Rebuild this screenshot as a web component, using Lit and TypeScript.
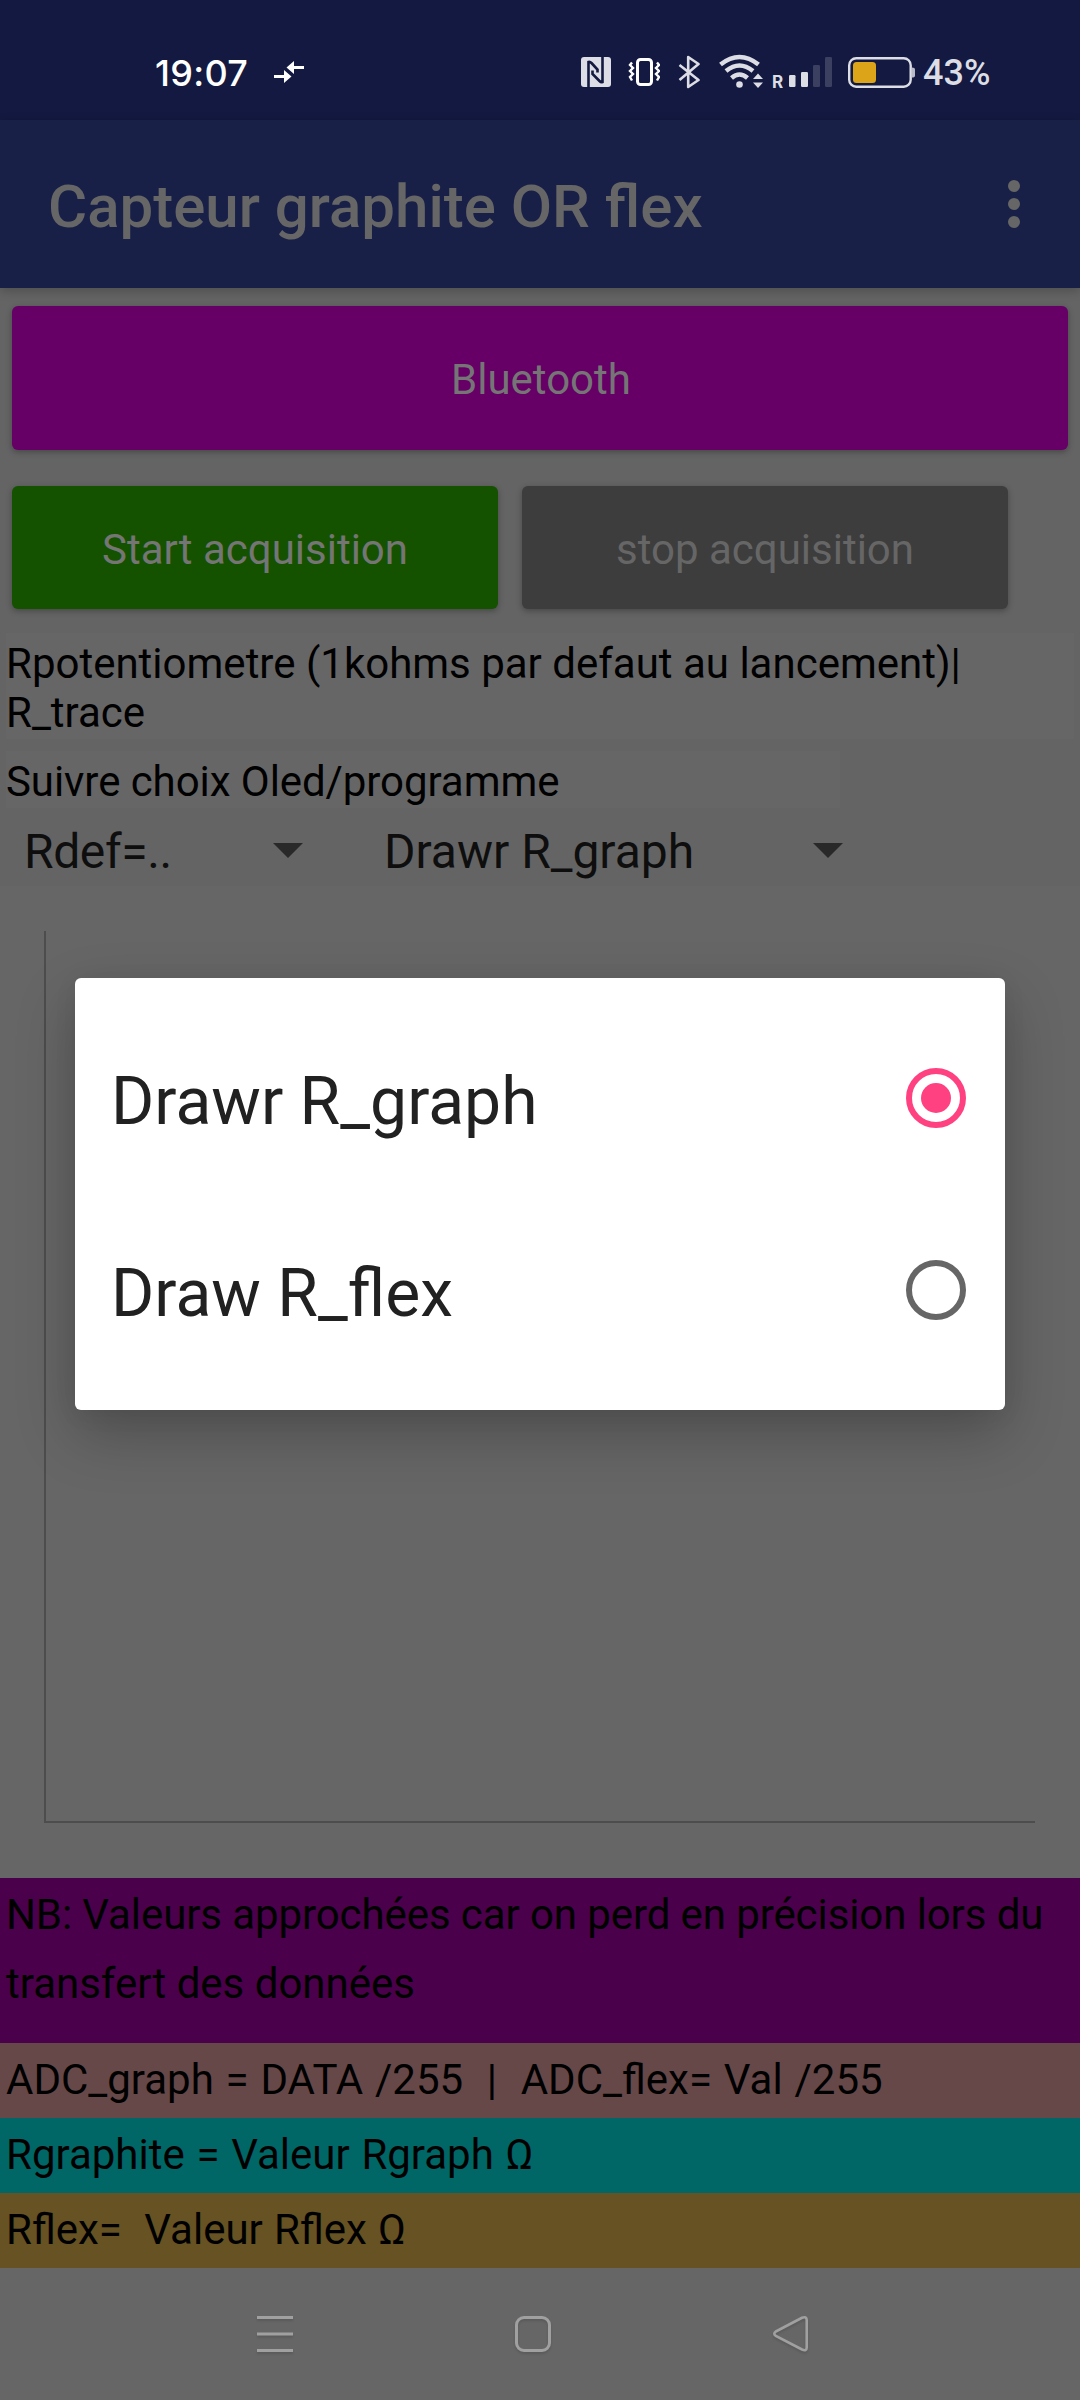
import { LitElement, html, css, svg } from "lit";
import { customElement, property, state } from "lit/decorators.js";
import { classMap } from "lit/directives/class-map.js";

@customElement("status-bar")
class StatusBar extends LitElement {
  static styles = css`
    :host { display: flex; height: 120px; background: #131940; color: #dcdde5;
      font: 500 36px/46px Inter, sans-serif; box-sizing: border-box; padding: 50px 90px 0 155px; }
    .time { color: #fff; width: 119px; white-space: nowrap; letter-spacing: .3px; }
    .grow { flex: 1; }
    svg { display: block; flex: none; height: 46px; }
    .arrows { width: 32px; }
    .nfc { width: 32px; margin-right: 16px; }
    .vib { width: 32px; margin-right: 16px; }
    .bt { width: 24px; margin-right: 16px; }
    .wifi { width: 48px; margin-right: 4px; }
    .signal { width: 64px; margin-right: 16px; }
    .battery { width: 68px; margin-right: 7px; }
    .pct { width: 67px; white-space: nowrap; font-family: Roboto, sans-serif; }
    .r { font: 700 17px Inter, sans-serif; fill: #dcdde5; }
  `;
  render() {
    return html`
      <span class="time">19:07</span>
      <svg class="arrows" viewBox="274 50 32 46" fill="#fff">
        <path d="M274 75h10v-5l7.500 6.500-7.500 6.500v-5h-10zM304 66h-10v-5l-7.500 6.500 7.500 6.500v-5h10z" />
      </svg>
      <span class="grow"></span>
      <svg class="nfc" viewBox="580 50 32 46">
        <rect x="581" y="57" width="30" height="30" rx="3" fill="#dcdde5" />
        <path d="M588.500 87.500V62q1.500-.5 3 1l6 6.500v3M602.500 56.500V82q-1.500.5-3-1l-7-7v-3.500" fill="none" stroke="#131940" stroke-width="2.600" />
      </svg>
      <svg class="vib" viewBox="628 50 32 46" fill="none" stroke="#fff">
        <rect x="637.500" y="59.500" width="14" height="25" rx="3" stroke-width="3" />
        <path d="M632 62.500l-2 2.500 3 3-3 3 3 3-3 3 2 3.500M657 62.500l2 2.500-3 3 3 3-3 3 3 3-2 3.500" stroke-width="2.400" />
      </svg>
      <svg class="bt" viewBox="676 50 24 46" fill="none" stroke="#dcdde5" stroke-width="2.600" stroke-linejoin="round">
        <path d="M679.500 65l19 15-10.300 7V57l10.300 7-19 16" />
      </svg>
      <svg class="wifi" viewBox="716 50 48 46" fill="none" stroke="#dcdde5">
        <path d="M720.500 64.500q19-15 38 0M726 71q13.500-11 27 0M731.500 78q8-7 16 0" stroke-width="4.500" />
        <circle cx="739.500" cy="84.500" r="3.300" fill="#dcdde5" stroke="none" />
        <path d="M753 79l5-5.500 5 5.500zM753 82.500h10l-5 5.500z" fill="#dcdde5" stroke="none" />
      </svg>
      <svg class="signal" viewBox="768 50 64 46">
        <text class="r" x="772" y="88">R</text>
        <g fill="#dcdde5">
          <rect x="789" y="75" width="6.500" height="12" rx="1.200" />
          <rect x="801" y="72" width="7" height="15" rx="1.200" />
        </g>
        <g fill="#3b3f60">
          <rect x="813" y="65" width="7" height="22" rx="1.200" />
          <rect x="825" y="57" width="7" height="30" rx="1.200" />
        </g>
      </svg>
      <svg class="battery" viewBox="848 50 68 46">
        <rect x="849.200" y="58.200" width="61.500" height="28.500" rx="7" fill="none" stroke="#dcdde5" stroke-width="2.400" />
        <rect x="853" y="62" width="23" height="21" rx="3.500" fill="#dca418" />
        <path d="M912 67.500q3 0 3 2v6q0 2-3 2z" fill="#b9bac8" />
      </svg>
      <span class="pct">43%</span>
    `;
  }
}

@customElement("radio-option")
class RadioOption extends LitElement {
  @property() label = "";
  @property({ type: Boolean }) checked = false;
  static styles = css`
    :host { display: flex; align-items: center; justify-content: space-between; height: 192px;
      padding: 0 39px 0 36px; font: 400 66px/78px Roboto, sans-serif; color: #212121; }
    .label { padding-top: 7px; white-space: nowrap; }
    .radio { width: 60px; height: 60px; color: #666; display: block; }
    .on { color: #ff4081; }
  `;
  render() {
    return html`
      <span class="label">${this.label}</span>
      <svg class=${classMap({ radio: true, on: this.checked })} viewBox="0 0 60 60">
        <circle cx="30" cy="30" r="27" fill="none" stroke="currentColor" stroke-width="6" />
        ${this.checked ? svg`<circle cx="30" cy="30" r="15" fill="currentColor" />` : null}
      </svg>
    `;
  }
}

@customElement("app-root")
class AppRoot extends LitElement {
  @state() private selected = "Drawr R_graph";
  private options = ["Drawr R_graph", "Draw R_flex"];

  static styles = css`
    :host { display: flex; flex-direction: column; position: relative; width: 1080px; height: 2400px;
      overflow: hidden; background: #646464; color: #000; font: 400 42px/49px Roboto, sans-serif; }
    .appbar { display: flex; align-items: center; justify-content: space-between; height: 168px; flex: none;
      padding: 0 60px 0 48px; box-sizing: border-box; background: #192048; color: #666;
      box-shadow: 0 3px 10px rgba(0, 0, 0, .22); }
    .title { font-size: 60px; line-height: 70px; font-weight: 500; padding-top: 5px; }
    .more { width: 12px; height: 48px; }
    .buttons { display: flex; gap: 24px; padding: 18px 12px 0; }
    .buttons.second { padding: 36px 12px 0; }
    .btn { display: flex; align-items: center; justify-content: center; box-sizing: border-box;
      border-radius: 6px; padding-top: 4px; box-shadow: 0 2px 6px rgba(0, 0, 0, .3); color: #757575; }
    .bluetooth { width: 1056px; height: 144px; background: #660066; padding: 2px 0 0 2px; }
    .start { width: 486px; height: 123px; background: #145200; }
    .stop { width: 486px; height: 123px; background: #3d3d3d; color: #666; }
    .note { box-sizing: border-box; background: #666; margin-left: 6px; padding-top: 6px; white-space: pre-line; }
    .pot { width: 1068px; height: 106px; margin-top: 24px; }
    .follow { width: 834px; height: 57px; margin-top: 12px; letter-spacing: -.07px; }
    .spinners { display: flex; height: 71px; margin-top: 7px; padding-left: 24px; align-items: center;
      font-size: 48px; line-height: 56px; color: #0e0e0e; }
    .spinner { display: flex; align-items: center; justify-content: space-between; }
    .spinner span { padding-top: 2px; }
    .rdef { width: 279px; margin-right: 81px; }
    .rdef span { letter-spacing: -.4px; }
    .draw { width: 459px; }
    .caret { width: 30px; height: 15px; display: block; }
    .chart { height: 992px; background: #666; box-sizing: border-box; padding: 45px 45px 55px 44px; }
    .plot { height: 100%; box-sizing: border-box; border-left: 2px solid #4d4d4d; border-bottom: 2px solid #4d4d4d; }
    .line { box-sizing: border-box; padding-left: 6px; height: 75px; line-height: 73px; white-space: pre; }
    .nb { height: 165px; padding-top: 3px; line-height: 68.500px; background: #4a004a; }
    .tight { letter-spacing: -.09px; }
    .adc { background: #664848; word-spacing: 1.400px; }
    .graph { background: #006666; word-spacing: 1.300px; }
    .flex { background: #665222; word-spacing: .8px; }
    .nav { flex: 1; background: #666; display: flex; padding: 46px 269px 0 255px; justify-content: space-between; }
    .nav svg { width: 40px; height: 42px; filter: drop-shadow(0 2px 1px rgba(0, 0, 0, .12)); }
    .dialog { position: absolute; left: 75px; top: 978px; width: 930px; height: 432px; box-sizing: border-box;
      padding: 24px 0; background: #fff; border-radius: 6px;
      box-shadow: 0 24px 60px rgba(0, 0, 0, .24), 0 4px 24px rgba(0, 0, 0, .06); }
  `;

  private caret() {
    return html`<svg class="caret" viewBox="0 0 30 15"><path d="M0 0h30L15 15z" fill="#292929" /></svg>`;
  }

  render() {
    return html`
      <status-bar></status-bar>
      <header class="appbar">
        <span class="title">Capteur graphite OR flex</span>
        <svg class="more" viewBox="0 0 12 48" fill="#666">
          <circle cx="6" cy="6" r="6" /><circle cx="6" cy="24" r="6" /><circle cx="6" cy="42" r="6" />
        </svg>
      </header>
      <div class="buttons"><div class="btn bluetooth">Bluetooth</div></div>
      <div class="buttons second">
        <div class="btn start">Start acquisition</div>
        <div class="btn stop">stop acquisition</div>
      </div>
      <div class="note pot">Rpotentiometre (1kohms par defaut au lancement)|
R_trace</div>
      <div class="note follow">Suivre choix Oled/programme</div>
      <div class="spinners">
        <div class="spinner rdef"><span>Rdef=..</span>${this.caret()}</div>
        <div class="spinner draw"><span>${this.selected}</span>${this.caret()}</div>
      </div>
      <div class="chart"><div class="plot"></div></div>
      <div class="line nb"><span class="tight">NB: Valeurs approchées car on perd en précision lors du</span>
transfert des données</div>
      <div class="line adc">ADC_graph = DATA /255  |  ADC_flex= Val /255</div>
      <div class="line graph">Rgraphite = Valeur Rgraph Ω</div>
      <div class="line flex">Rflex=  Valeur Rflex Ω</div>
      <nav class="nav">
        <svg viewBox="255 2314 40 42" stroke="#a0a0a0" stroke-width="3"><path d="M257 2317.500h36M257 2334h36M257 2350.500h36" /></svg>
        <svg viewBox="513 2314 40 42" stroke="#a0a0a0" stroke-width="3" fill="none"><rect x="516.500" y="2317.500" width="33" height="33" rx="7.500" /></svg>
        <svg viewBox="771 2314 40 42" stroke="#a0a0a0" stroke-width="2.600" fill="none">
          <path d="M775.800 2331.500L802 2317.800Q806.700 2316 806.700 2320V2347.500Q806.700 2351.500 802 2349.500L775.800 2336Q772.800 2333.800 775.800 2331.500z" />
        </svg>
      </nav>
      <div class="dialog">
        ${this.options.map(
          (o) => html`<radio-option .label=${o} ?checked=${o === this.selected} @click=${() => (this.selected = o)}></radio-option>`
        )}
      </div>
    `;
  }
}
